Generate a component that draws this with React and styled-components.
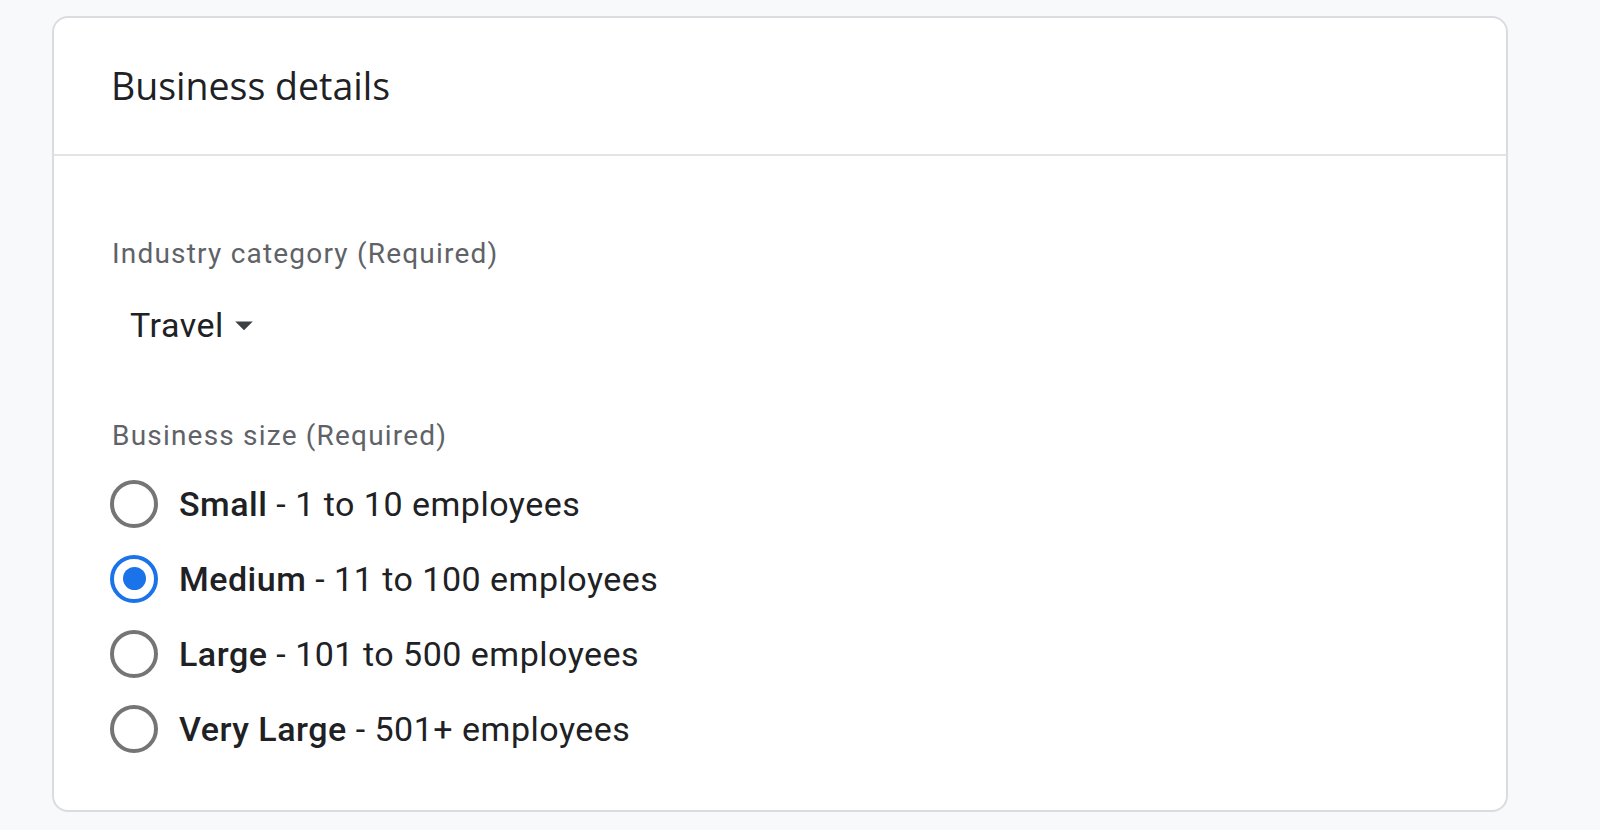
import React, { useState } from "react";
import styled, { createGlobalStyle } from "styled-components";

const GlobalStyle = createGlobalStyle`
  html, body {
    margin: 0;
    padding: 0;
    background: #f8f9fa;
  }
  body {
    font-family: Roboto, "Liberation Sans", Arial, sans-serif;
    color: #202124;
  }
`;

const Page = styled.div`
  width: 1600px;
  height: 830px;
  padding: 16px 0 0 52px;
  box-sizing: border-box;
`;

const Card = styled.section`
  width: 1456px;
  height: 796px;
  box-sizing: border-box;
  background: #fff;
  border: 2px solid #dadce0;
  border-radius: 16px;
  overflow: hidden;
`;

const Header = styled.div`
  height: 136px;
  display: flex;
  align-items: center;
  padding-left: 57px;
  border-bottom: 2px solid #e3e4e7;
`;

const Title = styled.h2`
  margin: 0;
  font-family: "Open Sans", Roboto, sans-serif;
  font-weight: 400;
  font-size: 37.5px;
  line-height: 44px;
  color: #202124;
`;

const Body = styled.div`
  padding: 80px 56px 0 56px;
`;

const FieldLabel = styled.div`
  padding-left: 2px;
  font-size: 28px;
  line-height: 36px;
  letter-spacing: 1.2px;
  color: #5f6368;
  margin-bottom: ${(p) => p.$gap || 0}px;
`;

const Dropdown = styled.button`
  display: inline-flex;
  align-items: center;
  height: 48px;
  border: none;
  background: none;
  padding: 0 0 0 20px;
  margin: 0 0 69px 0;
  font-family: Roboto, sans-serif;
  font-size: 34px;
  line-height: 40px;
  letter-spacing: 0.5px;
  color: #202124;
  cursor: pointer;
`;

const Arrow = styled.svg`
  width: 42px;
  height: 42px;
  margin-left: -1px;
  fill: #3c4043;
`;

const RadioList = styled.div`
  display: flex;
  flex-direction: column;
`;

const RadioRow = styled.label`
  display: flex;
  align-items: center;
  height: 75px;
  cursor: pointer;
`;

const RadioCircle = styled.span`
  width: 48px;
  height: 48px;
  box-sizing: border-box;
  border-radius: 50%;
  border: 4px solid ${(p) => (p.$checked ? "#1a73e8" : "#757575")};
  display: flex;
  align-items: center;
  justify-content: center;
  flex-shrink: 0;
  &::after {
    content: "";
    width: 23px;
    height: 23px;
    border-radius: 50%;
    background: #1a73e8;
    display: ${(p) => (p.$checked ? "block" : "none")};
  }
`;

const OptionText = styled.span`
  margin-left: 21px;
  font-size: 34px;
  line-height: 40px;
  letter-spacing: 0.5px;
  color: #202124;
`;

const Strong = styled.b`
  font-weight: 500;
`;

const options = [
  { name: "Small", desc: "1 to 10 employees" },
  { name: "Medium", desc: "11 to 100 employees" },
  { name: "Large", desc: "101 to 500 employees" },
  { name: "Very Large", desc: "501+ employees" },
];

export default function App() {
  const [size, setSize] = useState("Medium");
  return (
    <Page>
      <GlobalStyle />
      <Card>
        <Header>
          <Title>Business details</Title>
        </Header>
        <Body>
          <FieldLabel $gap={29}>Industry category (Required)</FieldLabel>
          <Dropdown>
            Travel
            <Arrow viewBox="0 0 24 24">
              <path d="M7 10l5 5 5-5z" />
            </Arrow>
          </Dropdown>
          <FieldLabel $gap={12}>Business size (Required)</FieldLabel>
          <RadioList>
            {options.map((o) => (
              <RadioRow key={o.name} onClick={() => setSize(o.name)}>
                <RadioCircle $checked={size === o.name} />
                <OptionText>
                  <Strong>{o.name}</Strong> - {o.desc}
                </OptionText>
              </RadioRow>
            ))}
          </RadioList>
        </Body>
      </Card>
    </Page>
  );
}
